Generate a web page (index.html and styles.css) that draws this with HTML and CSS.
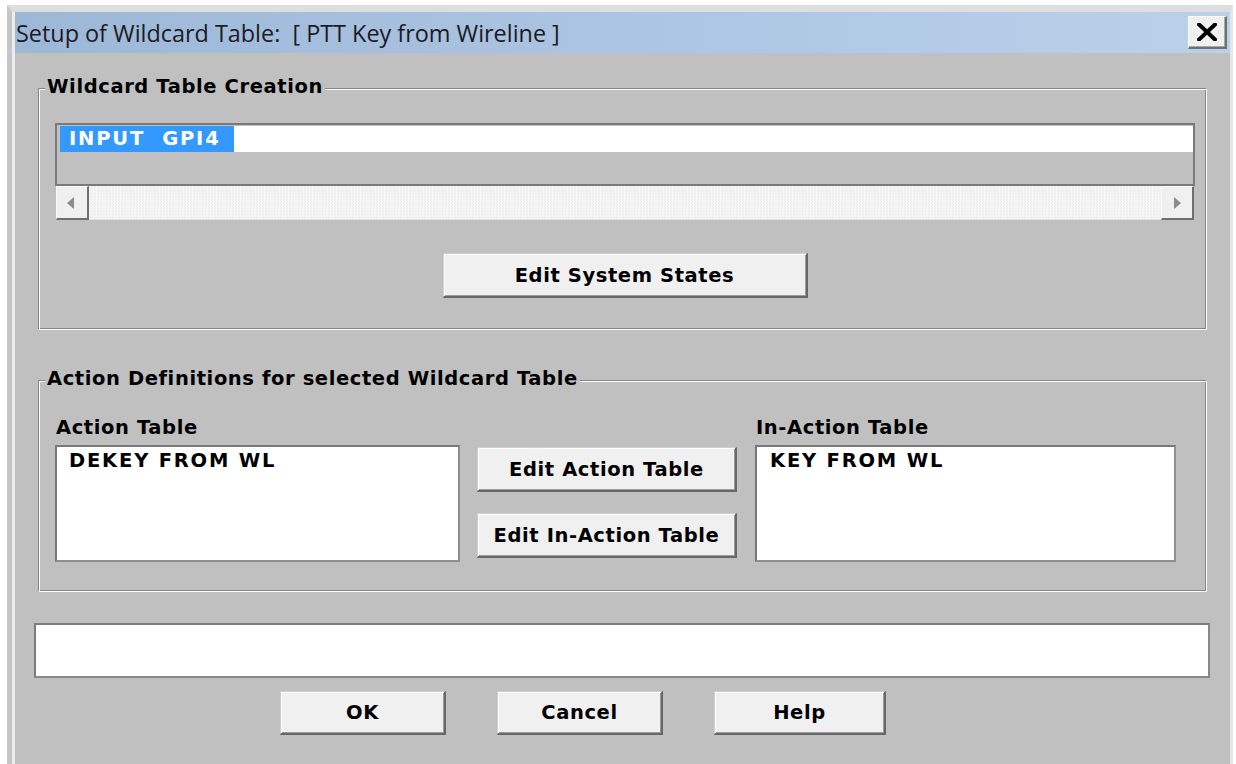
FILE: index.html
```html
<!DOCTYPE html>
<html lang="en">
<head>
<meta charset="utf-8">
<title>Setup of Wildcard Table</title>
<link rel="stylesheet" href="styles.css">
</head>
<body>
<div class="window">
  <div class="frame-inner">
    <div class="titlebar">
      <span class="title">Setup of Wildcard Table:&nbsp; [ PTT Key from Wireline ]</span>
      <button class="close" type="button" aria-label="Close">
        <svg width="20" height="18" viewBox="0 0 20 18" aria-hidden="true">
          <path d="M2 1.5 L18 16.5 M18 1.5 L2 16.5" stroke="#000" stroke-width="4" stroke-linecap="square" fill="none"/>
        </svg>
      </button>
    </div>

    <div class="client">
      <section class="group group-create">
        <span class="group-label">Wildcard Table Creation</span>
        <div class="listbox">
          <div class="list-row"><span class="list-item selected">INPUT&nbsp; GPI4</span></div>
        </div>
        <div class="hscroll">
          <span class="scroll-btn">
            <svg width="8" height="12" viewBox="0 0 8 12" aria-hidden="true"><path d="M8 0 L8 12 L1 6 Z" fill="#8c8c8c"/></svg>
          </span>
          <span class="scroll-track"></span>
          <span class="scroll-btn">
            <svg width="8" height="12" viewBox="0 0 8 12" aria-hidden="true"><path d="M0 0 L0 12 L7 6 Z" fill="#8c8c8c"/></svg>
          </span>
        </div>
        <div class="center-row">
          <button class="btn btn-states" type="button">Edit System States</button>
        </div>
      </section>

      <section class="group group-actions">
        <span class="group-label">Action Definitions for selected Wildcard Table</span>
        <div class="action-grid">
          <div class="table-col">
            <div class="col-label">Action Table</div>
            <div class="table-box">DEKEY FROM WL</div>
          </div>
          <div class="button-col">
            <button class="btn btn-edit" type="button">Edit Action Table</button>
            <button class="btn btn-edit" type="button">Edit In-Action Table</button>
          </div>
          <div class="table-col">
            <div class="col-label">In-Action Table</div>
            <div class="table-box table-box-right">KEY FROM WL</div>
          </div>
        </div>
      </section>

      <div class="status"></div>

      <div class="dialog-buttons">
        <button class="btn btn-dialog" type="button">OK</button>
        <button class="btn btn-dialog" type="button">Cancel</button>
        <button class="btn btn-dialog btn-help" type="button">Help</button>
      </div>
    </div>
  </div>
</div>
</body>
</html>
```

FILE: styles.css
```css
*, *::before, *::after {
  box-sizing: border-box;
}

html, body {
  margin: 0;
  padding: 0;
  background: #ffffff;
  overflow: hidden;
}

body {
  font-family: "DejaVu Sans", "Liberation Sans", sans-serif;
  color: #000;
}

/* window frame */
.window {
  margin: 5px 0 0 7px;
  width: 1226px;
  height: 759px;
  border-left: 5px solid #c6c6c6;
  border-top: 7px solid #dedede;
  border-right: 3px solid #e6e6e6;
}

.frame-inner {
  border-left: 3px solid #ececec;
  height: 100%;
  display: flex;
  flex-direction: column;
}

/* caption */
.titlebar {
  height: 41px;
  flex: none;
  display: flex;
  align-items: center;
  justify-content: space-between;
  background: linear-gradient(to right, #9db7d7 0%, #adc6e3 55%, #b9d1ea 100%);
}

.title {
  font-family: "Open Sans", "Noto Sans", sans-serif;
  font-size: 23.4px;
  color: #1b1b24;
  padding-left: 1px;
  white-space: pre;
}

.close {
  width: 39px;
  height: 33px;
  margin-right: 3px;
  padding: 0;
  display: flex;
  align-items: center;
  justify-content: center;
  background: #f0f0f0;
  border-style: solid;
  border-width: 1px 2px 2px 1px;
  border-color: #fbfbfb #707070 #707070 #fbfbfb;
  box-shadow: inset -1px -1px 0 #a8a8a8;
}

/* dialog body */
.client {
  flex: 1;
  min-height: 0;
  overflow: hidden;
  background: #c0c0c0;
  padding: 35px 0 0 23px;
  font-weight: bold;
  font-size: 19.5px;
  letter-spacing: 0.6px;
}

/* etched group boxes */
.group {
  position: relative;
  width: 1168px;
  border: 1px solid #858585;
}

.group::before {
  content: "";
  position: absolute;
  top: 0;
  left: 0;
  right: -2px;
  bottom: -2px;
  border: 1px solid #ffffff;
  pointer-events: none;
}

.group-label {
  position: absolute;
  top: -13px;
  left: 6px;
  padding: 0 2px;
  line-height: 22px;
  background: #c0c0c0;
  white-space: nowrap;
  z-index: 1;
}

.group-create {
  padding: 34px 10px 30px 16px;
}

.group-actions {
  margin-top: 51px;
  padding: 36px 0 28px 16px;
}

/* wildcard list */
.listbox {
  height: 63px;
  border: 2px solid #7a7a7a;
  background: #c0c0c0;
}

.list-row {
  margin: 1px 0 0 3px;
  height: 26px;
  background: #ffffff;
  display: flex;
}

.list-item {
  width: 174px;
  padding-left: 9px;
  line-height: 26px;
  letter-spacing: 1.8px;
}

.list-item.selected {
  background: #3399ff;
  color: #ffffff;
}

/* horizontal scroll bar */
.hscroll {
  margin-left: 1px;
  width: 1138px;
  height: 34px;
  display: flex;
}

.scroll-btn {
  width: 33px;
  flex: none;
  display: flex;
  align-items: center;
  justify-content: center;
  background: #f0f0f0;
  border-style: solid;
  border-width: 1px 2px 2px 1px;
  border-color: #fbfbfb #6f6f6f #6f6f6f #fbfbfb;
}

.scroll-btn svg {
  margin-left: -4px;
}

.scroll-btn:last-child svg {
  margin-left: 2px;
}

.scroll-track {
  flex: 1;
  background-color: #f4f4f4;
  background-image: repeating-conic-gradient(#f7f7f7 0 25%, #eeeeee 0 50%);
  background-size: 3px 3px;
  border-bottom: 1px solid #e2e2e2;
}

.center-row {
  display: flex;
  justify-content: center;
  margin-top: 33px;
}

/* push buttons */
.btn {
  font: inherit;
  letter-spacing: inherit;
  color: #000;
  padding: 0;
  background: #f0f0f0;
  border-style: solid;
  border-width: 1px 2px 2px 1px;
  border-color: #cfcfcf #676767 #676767 #cfcfcf;
  box-shadow: inset 1px 1px 0 #fdfdfd, inset -1px -1px 0 #9c9c9c;
}

.btn-states {
  width: 365px;
  height: 45px;
}

/* action tables */
.action-grid {
  display: grid;
  grid-template-columns: 405px 260px 422px;
  column-gap: 17px;
}

.action-grid > .table-col:last-child {
  margin-left: 1px;
}

.col-label {
  line-height: 22px;
  margin-bottom: 6px;
  padding-left: 1px;
}

.table-box {
  height: 117px;
  background: #ffffff;
  border: 2px solid;
  border-color: #787878 #8e8e8e #8e8e8e #787878;
  padding: 0 0 0 12px;
  line-height: 28px;
  letter-spacing: 1.8px;
}

.table-box-right {
  padding-left: 13px;
}

.button-col {
  display: flex;
  flex-direction: column;
  gap: 21px;
  padding-top: 30px;
}

.btn-edit {
  height: 45px;
}

/* message line */
.status {
  margin: 32px 0 0 -4px;
  width: 1176px;
  height: 55px;
  background: #ffffff;
  border: 2px solid;
  border-color: #7c7c7c #888888 #888888 #7c7c7c;
}

.dialog-buttons {
  display: flex;
  gap: 51px;
  margin: 13px 0 0 242px;
}

.btn-dialog {
  width: 166px;
  height: 44px;
}

.btn-help {
  width: 172px;
}
```
